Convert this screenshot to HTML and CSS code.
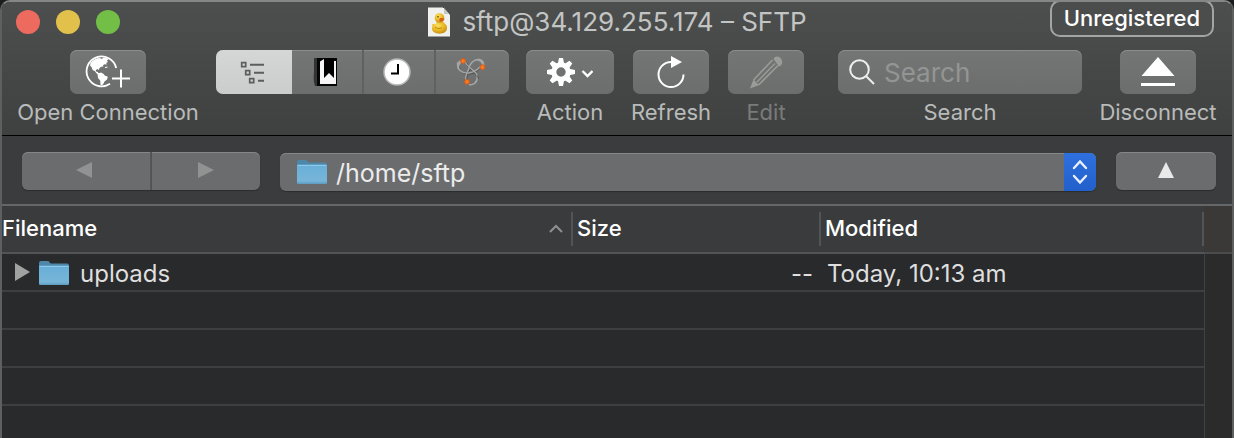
FILE: index.html
```html
<!DOCTYPE html>
<html lang="en">
<head>
<meta charset="utf-8">
<meta name="viewport" content="width=device-width, initial-scale=1">
<title>sftp@34.129.255.174 – SFTP</title>
<link rel="stylesheet" href="styles.css">
</head>
<body>
<svg class="defs" width="0" height="0" aria-hidden="true">
  <defs>
    <linearGradient id="folder-front" x1="0" y1="0" x2="0" y2="1">
      <stop offset="0" stop-color="#68afd8"/>
      <stop offset="0.85" stop-color="#77b5d8"/>
      <stop offset="1" stop-color="#5a9bc0"/>
    </linearGradient>
    <radialGradient id="duck-body" cx="0.4" cy="0.3" r="0.8">
      <stop offset="0" stop-color="#fbe05a"/>
      <stop offset="0.55" stop-color="#e6b422"/>
      <stop offset="1" stop-color="#b9850f"/>
    </radialGradient>
    <symbol id="folder" viewBox="0 0 30 24">
      <path d="M0 5V2q0-2 2-2h6.500q1.500 0 2 1.200t2 1.300H28q2 0 2 2V6H0z" fill="#4f87a8"/>
      <rect y="4.500" width="30" height="19.500" rx="1.200" fill="url(#folder-front)"/>
      <path d="M.5 5.500h29" stroke="#8cc9ea"/>
    </symbol>
  </defs>
</svg>
<div class="window">
  <header class="chrome">
    <div class="titlebar">
      <div class="lights">
        <button class="light light-close" aria-label="Close"></button>
        <button class="light light-minimise" aria-label="Minimise"></button>
        <button class="light light-zoom" aria-label="Zoom"></button>
      </div>
      <h1 class="title">
        <svg width="24" height="30" viewBox="0 0 24 30" aria-hidden="true">
          <path d="M1 .5h16L23 7v22.500H1z" fill="#f0f0ef"/>
          <path d="M17 .5V7h6z" fill="#c3c4c4"/>
          <path d="M16 .5h1L23 7v1" fill="none" stroke="#333" stroke-width=".8"/>
          <path d="M5.500 18.500c-1-1.500.5-2.500 1.500-1.200 1.500 0 3-.8 2.500-2.300h7c1 2 3.500 2.500 3.500 6 0 4-3.500 5.700-7.500 5.700C8 26.700 5 24.500 5 21.500z" fill="url(#duck-body)"/>
          <circle cx="12.500" cy="11" r="4.800" fill="url(#duck-body)"/>
          <path d="M12.500 11.500c2-.8 4-.6 5 .8-.5 1.800-3.500 2.700-5.200 1.700z" fill="#d95b1c"/>
          <circle cx="11" cy="9.800" r=".8" fill="#4b3408"/>
          <path d="M8 20c2 1.800 5 2 7 .5" fill="none" stroke="#b98612"/>
        </svg>
        <span>sftp@34.129.255.174 – SFTP</span>
      </h1>
      <button class="badge">Unregistered</button>
    </div>
    <div class="toolbar">
      <div class="item item-open">
        <button class="tool" id="open" aria-labelledby="open-label">
          <svg width="46" height="36" viewBox="0 0 46 36" aria-hidden="true">
            <path d="M31.200 14A15 15 0 1 0 25 29.800" fill="none" stroke="#fff" stroke-width="1.800"/>
            <path d="M5.500 9C8 5.500 12 4 15 4l1.500 1 2-1.300 3 .3 2 1.500-1.500 1 .8 1.500-1.600 1 .6 1.500-2.300-.2-1.500 1 .4 1.200-2.400.3-1.800 1.800-.4 1.300-1.300-.8-1.700.8.300 1.700 1.700.3.700 1.400 1.200.8-1 .6-2-1.200-1.700-2.200-2.300-1.400-1.200-3-1.500-1.500z" fill="#fff"/>
            <path d="M12.500 19.600l3.500-1 2.700 1.500 1 1.400 3.200 1.200-1 3-2.200 1.600-1.400 2.700-1.800 1.400-1-.8-.3-4-2.200-2.600z" fill="#fff"/>
            <path d="M20 13.500l2.500-.4" stroke="#fff"/>
            <path d="M36 15.500v18M27 24.500h18" stroke="#fff" stroke-width="2"/>
          </svg>
        </button>
        <label id="open-label" for="open">Open Connection</label>
      </div>

      <div class="segments" role="group" aria-label="View">
        <button class="segment segment-on" aria-label="Browser" aria-pressed="true">
          <svg width="24" height="24" viewBox="0 0 24 24" fill="none" stroke="#5c5d5c" aria-hidden="true">
            <path d="M1.700 2.700h4v4h-4zM5.700 10.700h4v4h-4zM9.700 18.700h4v4h-4z" stroke-width="1.700"/>
            <path d="M10 4.700h14M14 12.700h10M18 20.700h6" stroke-width="1.900"/>
          </svg>
        </button>
        <button class="segment" aria-label="Bookmarks" aria-pressed="false">
          <svg width="26" height="28" viewBox="0 0 26 28" aria-hidden="true">
            <path d="M2 0h5v28H3q-2-6-1-14z" fill="#333"/>
            <path d="M5 0h20v28H5z" fill="#050505"/>
            <path d="M8 3.500L12 1v19l5-5 5 5V3h2v23H8z" fill="#f6f6f6"/>
            <path d="M12 0h10v18.500L17 14l-5 4.500z" fill="#000"/>
          </svg>
        </button>
        <button class="segment" aria-label="History" aria-pressed="false">
          <svg width="28" height="28" viewBox="0 0 28 28" aria-hidden="true">
            <circle cx="14" cy="14" r="13" fill="#fff" stroke="#b5b6b5" stroke-width="1.500"/>
            <path d="M15 6v9.500H8" fill="none" stroke="#000" stroke-width="2"/>
          </svg>
        </button>
        <button class="segment segment-last" aria-label="Bonjour" aria-pressed="false">
          <svg width="30" height="30" viewBox="0 0 30 30" aria-hidden="true">
            <g fill="none" stroke="#515251" stroke-width="1.600" stroke-linecap="round">
              <path d="M3 7C2.500 13 7 17.500 13 17c5-.8 9-3.500 12-7"/>
              <path d="M10.500 6c1 6 10 9 11.500 15"/>
              <path d="M11 23c-1.500-4 2-8 3-12"/>
            </g>
            <g fill="none" stroke="#a3a5a6" stroke-width="1.400" stroke-linecap="round">
              <path d="M1.500 6C1 12 6 17 13 16c5-.8 9-3.500 12-7"/>
              <path d="M9 4c1 6 10 9 12 14"/>
              <path d="M10 23c-1.500-4 2-8 3-12 1-5 5-8.500 10-8.500"/>
            </g>
            <g fill="#a3a5a6">
              <path d="M5 3C0 4-.5 11 4 14.500 2.500 10.500 3 7 6.500 5z"/>
              <path d="M18 3c5-3 11-1 10.500 6L26 8c-.5-3-3-4.500-8-5z"/>
              <path d="M13 27c5 .5 8-3 7.500-9.500 3.500 6-.5 11.500-7.500 11z"/>
            </g>
            <g fill="#f47b24" stroke="#d7581a">
              <circle cx="7" cy="4" r="2.400"/><circle cx="26.500" cy="10.200" r="2.400"/><circle cx="11" cy="24.800" r="2.400"/>
            </g>
          </svg>
        </button>
      </div>

      <div class="item item-action">
        <button class="tool" id="action" aria-labelledby="action-label">
          <svg width="46" height="28" viewBox="0 0 46 28" aria-hidden="true">
            <g fill="#fff">
              <path id="teeth" d="M12 0h4l1.200 6h-6.400zM12 28h4l1.200-6h-6.400zM0 12v4l6 1.200v-6.400zM28 12v4l-6 1.200v-6.400z"/>
              <use href="#teeth" transform="rotate(45 14 14)"/>
            </g>
            <circle cx="14" cy="14" r="7.200" fill="none" stroke="#fff" stroke-width="5"/>
            <path d="M35.500 13l5 5 5-5" fill="none" stroke="#fff" stroke-width="2.400"/>
          </svg>
        </button>
        <label id="action-label" for="action">Action</label>
      </div>

      <div class="item item-refresh">
        <button class="tool" id="refresh" aria-labelledby="refresh-label">
          <svg width="28" height="34" viewBox="0 0 28 34" aria-hidden="true">
            <path d="M14 7a12.500 12.500 0 1 0 12.500 12.500" fill="none" stroke="#fff" stroke-width="2"/>
            <path d="M14 1l11 6-11 6z" fill="#fff"/>
          </svg>
        </button>
        <label id="refresh-label" for="refresh">Refresh</label>
      </div>

      <div class="item item-edit">
        <button class="tool" id="edit" aria-labelledby="edit-label" disabled>
          <svg width="34" height="34" viewBox="0 0 34 34" fill="none" aria-hidden="true">
            <path d="M23.500 5L4.500 25M29 10.500L9.500 30" stroke="#9a9c9a" stroke-width="1.600"/>
            <path d="M26 8.500L8 27" stroke="#9a9c9a" stroke-width="1.400"/>
            <path d="M4.500 24.500L1 33.500l9-3.500zM24.500 4c3-6 12 .5 7.500 6.500l-2 1z" fill="#9a9c9a"/>
          </svg>
        </button>
        <label id="edit-label" for="edit">Edit</label>
      </div>

      <div class="item item-search">
        <div class="search">
          <svg width="26" height="26" viewBox="0 0 26 26" fill="none" stroke="#eee" stroke-width="2" aria-hidden="true">
            <circle cx="10.500" cy="10.500" r="9.300"/>
            <path d="M17 17l8 8"/>
          </svg>
          <input id="search" type="search" placeholder="Search">
        </div>
        <label for="search">Search</label>
      </div>

      <div class="item item-disconnect">
        <button class="tool" id="disconnect" aria-labelledby="disconnect-label">
          <svg width="34" height="30" viewBox="0 0 34 30" fill="#fff" aria-hidden="true">
            <path d="M17 0l16.500 19H.5zM0 26h34v3H0z"/>
          </svg>
        </button>
        <label id="disconnect-label" for="disconnect">Disconnect</label>
      </div>
    </div>
  </header>

  <nav class="pathbar" aria-label="Path">
    <div class="history">
      <button class="nav nav-back" aria-label="Back" disabled>
        <svg width="16" height="16" viewBox="0 0 16 16"><path d="M16 0v16L0 8z" fill="#919292"/></svg>
      </button>
      <button class="nav nav-forward" aria-label="Forward" disabled>
        <svg width="16" height="16" viewBox="0 0 16 16"><path d="M0 0v16l16-8z" fill="#919292"/></svg>
      </button>
    </div>
    <div class="path">
      <svg class="path-icon" width="30" height="24" aria-hidden="true"><use href="#folder"/></svg>
      <select class="path-select" aria-label="Current directory"><option>/home/sftp</option></select>
      <span class="stepper">
        <svg width="16" height="26" viewBox="0 0 16 26" fill="none" stroke="#e8effb" stroke-width="2.400" stroke-linecap="round" aria-hidden="true">
          <path d="M2 9l6-6.500L14 9M2 17l6 6.500 6-6.500"/>
        </svg>
      </span>
    </div>
    <button class="nav nav-up" aria-label="Parent directory">
      <svg width="16" height="16" viewBox="0 0 16 16"><path d="M8 0l8 16H0z" fill="#e9e9e9"/></svg>
    </button>
  </nav>

  <main class="browser">
    <table class="files">
      <colgroup><col class="col-name"><col class="col-size"><col class="col-modified"><col class="col-gutter"></colgroup>
      <thead>
        <tr>
          <th><div class="head"><span>Filename</span>
            <svg width="14" height="9" viewBox="0 0 14 9" fill="none" stroke="#8f9091" stroke-width="2" aria-hidden="true"><path d="M1 8l6-6 6 6"/></svg></div></th>
          <th><div class="head">Size</div></th>
          <th><div class="head">Modified</div></th>
          <td class="gutter"></td>
        </tr>
      </thead>
      <tbody>
        <tr>
          <td>
            <div class="file">
              <button class="disclosure" aria-label="Expand uploads">
                <svg width="15" height="18" viewBox="0 0 15 18"><path d="M0 0v18l15-9z" fill="#a0a1a1"/></svg>
              </button>
              <svg width="30" height="24" aria-hidden="true"><use href="#folder"/></svg>
              <span>uploads</span>
            </div>
          </td>
          <td class="size">--</td>
          <td class="modified">Today, 10:13 am</td>
          <td class="gutter"></td>
        </tr>
        <tr><td></td><td></td><td></td><td class="gutter"></td></tr>
        <tr><td></td><td></td><td></td><td class="gutter"></td></tr>
        <tr><td></td><td></td><td></td><td class="gutter"></td></tr>
        <tr><td></td><td></td><td></td><td class="gutter"></td></tr>
      </tbody>
    </table>
  </main>
</div>
</body>
</html>
```
FILE: styles.css
```css
* {
  box-sizing: border-box;
}

body {
  margin: 0;
  background: #1b1c1d;
  font-family: Inter, Roboto, sans-serif;
  color: #dfdfdf;
}

button,
input,
select {
  margin: 0;
  padding: 0;
  border: 0;
  font: inherit;
  color: inherit;
}

svg {
  display: block;
  flex: none;
}

.defs {
  position: absolute;
}

.window {
  display: flex;
  flex-direction: column;
  height: 100vh;
  overflow: hidden;
  border: 2px solid #5e605f;
  border-top-color: #858786;
  border-bottom: 0;
  border-radius: 10px 10px 0 0;
  background: #292a2c;
}

.chrome {
  background: linear-gradient(#4d4f4e, #3f4140);
  border-bottom: 1px solid #000;
  padding-bottom: 9px;
}

.titlebar {
  position: relative;
  display: flex;
  align-items: center;
  justify-content: center;
  height: 40px;
}

.lights {
  position: absolute;
  left: 14px;
  top: 8px;
  display: flex;
  gap: 16px;
}

.light {
  width: 24px;
  height: 24px;
  border-radius: 50%;
}

.light-close {
  background: #ed6a5e;
}

.light-minimise {
  background: #e1c04c;
}

.light-zoom {
  background: #72be47;
}

.title {
  display: flex;
  align-items: center;
  gap: 11px;
  margin: 0;
  font-size: 26px;
  line-height: 32px;
  font-weight: 400;
  color: #c3c5c4;
}

.badge {
  position: absolute;
  right: 18px;
  top: -2px;
  height: 37px;
  padding: 0 12px 2px;
  border: 2px solid #a3a5a4;
  border-radius: 10px;
  background: #4b4d4c;
  font-size: 22px;
  font-weight: 500;
  color: #fff;
}

.toolbar {
  display: flex;
  align-items: flex-start;
  gap: 17px;
  padding: 8px 15px 0;
}

.item {
  display: flex;
  flex-direction: column;
  align-items: center;
  gap: 4px;
  font-size: 22px;
  line-height: 28px;
  color: #b9bbba;
  white-space: nowrap;
}

.item-open {
  width: 182px;
}

.item-action {
  width: 88px;
}

.item-refresh {
  width: 80px;
}

.item-edit {
  width: 76px;
}

.item-edit label {
  color: #797b7a;
}

.item-search {
  flex: 1;
  min-width: 120px;
  margin-left: 17px;
}

.item-disconnect {
  width: 118px;
}

.tool,
.search,
.segments {
  height: 44px;
  border-radius: 7px;
  background: linear-gradient(#747675, #6c6e6d);
  box-shadow: inset 0 1px #8b8d8c;
}

.tool {
  display: flex;
  align-items: center;
  justify-content: center;
  width: 76px;
}

.item-action .tool {
  width: 88px;
}

.segments {
  display: flex;
  width: 293px;
  overflow: hidden;
}

.segment {
  flex: 1;
  display: flex;
  align-items: center;
  justify-content: center;
  padding-right: 4px;
  background: none;
  border-left: 2px solid #5f6160;
}

.segment-on {
  flex: 0 0 76px;
  border-left: 0;
  background: linear-gradient(#d5d7d6, #cbcdcc);
}

.segment-on + .segment {
  border-left: 0;
}

.segment-last {
  flex: 0 0 75px;
}

.search {
  display: flex;
  align-items: center;
  gap: 9px;
  width: 100%;
  padding: 0 11px;
}

.search input {
  flex: 1;
  min-width: 0;
  height: 44px;
  background: none;
  outline: 0;
  font-size: 26px;
  appearance: none;
}

.search input::placeholder {
  color: #939594;
}

.pathbar {
  display: flex;
  align-items: center;
  gap: 20px;
  height: 70px;
  padding: 2px 16px 0 20px;
  background: #3b3c3e;
  border-bottom: 2px solid #656668;
}

.history {
  display: flex;
  width: 238px;
}

.nav {
  display: flex;
  align-items: center;
  justify-content: center;
  height: 38px;
  padding-bottom: 2px;
  border-radius: 6px;
  background: #6b6c6e;
  box-shadow: inset 0 1px #858688, 0 1px 1px #2b2c2d;
}

.nav-back {
  flex: 0 0 130px;
  border-right: 2px solid #565759;
  border-radius: 6px 0 0 6px;
  padding-right: 4px;
}

.nav-forward {
  flex: 1;
  border-radius: 0 6px 6px 0;
}

.nav-up {
  width: 100px;
}

.path {
  flex: 1;
  display: flex;
  align-items: center;
  min-width: 0;
  height: 38px;
  margin-top: 2px;
  padding-left: 17px;
  border-radius: 6px;
  overflow: hidden;
  background: #6b6c6e;
  box-shadow: inset 0 1px #858688, 0 1px 1px #2b2c2d;
}

.path-select {
  flex: 1;
  min-width: 0;
  height: 38px;
  padding: 2px 0 0 9px;
  appearance: none;
  background: none;
  font-size: 25px;
  color: #ececec;
}

.stepper {
  display: flex;
  align-items: center;
  justify-content: center;
  width: 32px;
  height: 38px;
  background: linear-gradient(#2e70de, #2260cb);
}

.browser {
  flex: 1;
  min-height: 0;
  overflow: hidden;
}

.files {
  width: 100%;
  table-layout: fixed;
  border-collapse: separate;
  border-spacing: 0;
  font-size: 24px;
}

.col-name {
  width: 571px;
}

.col-size {
  width: 248px;
}

.col-gutter {
  width: 28px;
}

.files th,
.files td {
  padding: 0;
  height: 38px;
  border-bottom: 2px solid #3e3f41;
}

.files thead th,
.files thead td {
  height: 48px;
  border-bottom: 2px solid #535456;
  background: #3a3b3d;
  text-align: left;
  font-size: 22px;
  font-weight: 500;
  color: #fff;
}

.head {
  display: flex;
  align-items: center;
  justify-content: space-between;
  height: 34px;
  padding: 0 8px 2px 4px;
  border-right: 2px solid #535456;
}

.files th:first-child .head {
  padding-left: 0;
}

.files .gutter {
  border-left: 1px solid #404142;
  border-bottom: 0;
  background: #2b2b2b;
}

.files thead .gutter {
  border-left: 0;
  border-bottom: 2px solid #4c4c4c;
  background: #3a3938;
}

.file {
  display: flex;
  align-items: center;
  height: 36px;
  padding: 2px 0 0 13px;
}

.file span {
  padding-left: 11px;
}

.disclosure {
  width: 24px;
  padding-bottom: 2px;
  background: none;
}

.files .size {
  padding: 2px 8px 0 0;
  text-align: right;
}

.files .modified {
  padding: 2px 0 0 6px;
}
```
